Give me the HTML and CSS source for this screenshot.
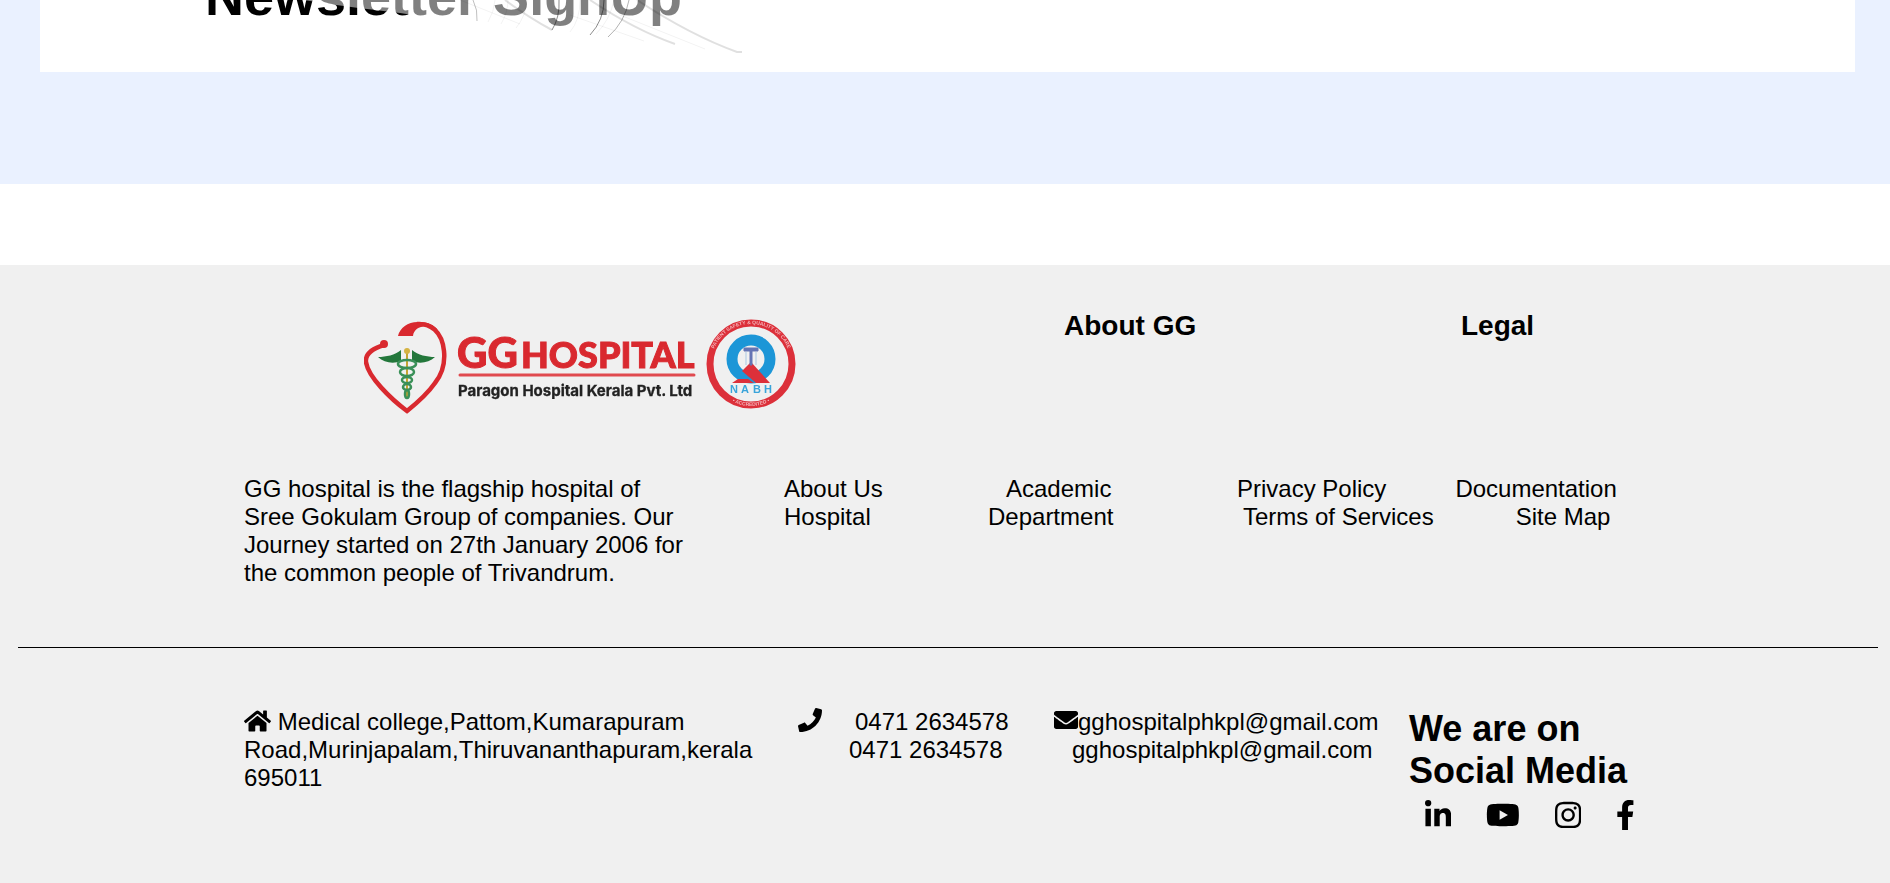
FILE: index.html
```html
<!DOCTYPE html>
<html lang="en">
<head>
<meta charset="utf-8">
<meta name="viewport" content="width=device-width, initial-scale=1">
<title>GG Hospital</title>
<link rel="stylesheet" href="styles.css">
</head>
<body>
<section class="newsletter">
  <div class="newsletter-card">
    <h2 class="newsletter-title">Newsletter SignUp</h2>
    <svg class="newsletter-art" viewBox="0 0 480 60" aria-hidden="true">
      <path d="M24 0Q60 6 120 13Q190 24 280 36L462 55L430 0Z" fill="#fff" fill-opacity=".5"/>
      <g fill="none" stroke="#000">
        <path d="M193 0Q198 10 197 21" stroke-opacity=".25"/>
        <path d="M279 0Q280 17 272 30M324 0Q324 20 310 35" stroke-opacity=".45"/>
        <path d="M349 0Q345 22 328 37" stroke-opacity=".3"/>
        <path d="M225 0Q248 17 272 30M310 0Q355 30 395 44" stroke-opacity=".12" stroke-width="2"/>
        <path d="M357 0Q410 35 457 52H462" stroke-opacity=".12" stroke-width="2"/>
        <path d="M228 0Q228 12 221 24M247 0Q246 16 236 28M300 0Q300 20 290 32M334 0Q330 20 316 34M180 0L240 24M290 15L364 41M340 15L425 49M215 0Q214 12 208 22" stroke-opacity=".05"/>
      </g>
    </svg>
  </div>
</section>

<footer class="footer">
  <div class="footer-top">
    <a class="brand" href="#" aria-label="GG Hospital home">
      <svg class="logo" viewBox="0 0 436 96" role="img" aria-label="GG Hospital, Paragon Hospital Kerala Pvt. Ltd, NABH accredited">
        <g fill="none" stroke="#d9292f" stroke-width="4.500">
          <path d="M20 26C7 30 1 35 2 43C4 58 27 80 43 92C53 84 64 74 71 64C79 54 81 42 80 32C78 12 66 4 53 5"/>
        </g>
        <circle cx="20" cy="25" r="4" fill="#d9292f"/>
        <path d="M34 17C36 8 45 2 56 3C64 3 70 6 74 11C63 4 50 7 49 17Z" fill="#d9292f"/>
        <path d="M14 38C22 38 31 36 37 31V42C30 45 20 44 14 38ZM71 38C63 38 54 36 48 31V42C55 45 65 44 71 38Z" fill="#23773b"/>
        <path d="M43 33V80" stroke="#c5a432" stroke-width="2"/>
        <circle cx="43" cy="32" r="3" fill="#d5b343"/>
        <g fill="none" stroke="#3a9058" stroke-width="2.500">
          <ellipse cx="43" cy="45" rx="9" ry="4"/><ellipse cx="43" cy="53" rx="7" ry="4"/><ellipse cx="43" cy="61" rx="5" ry="3"/><ellipse cx="43" cy="68" rx="4" ry="3"/><ellipse cx="43" cy="75" rx="2" ry="4"/>
        </g>
        <text class="logo-gg" x="93" y="49">GG</text>
        <text class="logo-name" x="157" y="49">HOSPITAL</text>
        <path d="M96 56H330" stroke="#e04a4f" stroke-width="3" stroke-linecap="round"/>
        <text class="logo-sub" x="94" y="77">Paragon Hospital Kerala Pvt. Ltd</text>
        <circle cx="387" cy="45" r="41" fill="none" stroke="#dc303a" stroke-width="7"/>
        <circle cx="387" cy="40" r="19" fill="none" stroke="#1c96d7" stroke-width="11"/>
        <path d="M387 43L406 64H392L378 52Z" fill="#dc303a"/>
        <path d="M368 64L374 60H384L390 64Z" fill="#dc303a"/>
        <path d="M380 29H394V32H388V46H386V32H380Z" fill="#6474b4" stroke="#6474b4"/>
        <path d="M382 33V46M392 33V46" stroke="#a9c8e3"/>
        <text class="logo-nabh" x="366" y="74">N</text><text class="logo-nabh" x="377" y="74">A</text><text class="logo-nabh" x="389" y="74">B</text><text class="logo-nabh" x="400" y="74">H</text>
        <path id="seal-top" d="M347 45A40 40 0 0 1 427 45" fill="none"/>
        <path id="seal-bottom" d="M345 45A42 42 0 0 0 429 45" fill="none"/>
        <text class="logo-seal"><textPath href="#seal-top" startOffset="50%">PATIENT SAFETY &amp; QUALITY OF CARE</textPath></text>
        <text class="logo-seal"><textPath href="#seal-bottom" startOffset="50%">• ACCREDITED •</textPath></text>
      </svg>
    </a>
    <h3 class="footer-title">About GG</h3>
    <h3 class="footer-title">Legal</h3>
  </div>

  <div class="footer-links">
    <p class="about-text">GG hospital is the flagship hospital of Sree Gokulam Group of companies. Our Journey started on 27th January 2006 for the common people of Trivandrum.</p>
    <nav class="about-links" aria-label="About GG">
      <a href="#">About Us</a><a class="indent-lg" href="#">Academic</a>
      <a href="#">Hospital</a><a href="#">Department</a>
    </nav>
    <nav class="legal-links" aria-label="Legal">
      <div class="legal-row legal-row-first"><a href="#">Privacy Policy</a><a href="#">Documentation</a></div>
      <div class="legal-row legal-row-second"><a href="#">Terms of Services</a><a href="#">Site Map</a></div>
    </nav>
  </div>

  <hr class="divider">

  <div class="footer-contact">
    <address class="address"><svg class="icon-home" viewBox="0 0 576 512" aria-hidden="true"><path d="M280.400 148.300L96 300.100V464a16 16 0 0 0 16 16l112.100-.3a16 16 0 0 0 15.900-16V368a16 16 0 0 1 16-16h64a16 16 0 0 1 16 16v95.600a16 16 0 0 0 16 16.100L464 480a16 16 0 0 0 16-16V300L295.700 148.300a12.200 12.200 0 0 0-15.300 0zM571.600 251.500L488 182.600V44.100a12 12 0 0 0-12-12h-56a12 12 0 0 0-12 12v72.600L318.500 43a48 48 0 0 0-61 0L4.300 251.500a12 12 0 0 0-1.600 16.900l25.500 31A12 12 0 0 0 45.200 301L280.400 107.200a12.200 12.200 0 0 1 15.300 0L530.900 301a12 12 0 0 0 16.900-1.600l25.500-31a12 12 0 0 0-1.700-16.900z"/></svg> Medical college,Pattom,Kumarapuram Road,Murinjapalam,Thiruvananthapuram,kerala 695011</address>
    <div class="phones">
      <svg class="icon-sm" viewBox="0 0 512 512" aria-hidden="true"><path d="M493.400 24.600l-104-24c-11.300-2.600-22.900 3.300-27.500 13.900l-48 112c-4.200 9.800-1.400 21.300 6.900 28l60.600 49.600c-36 76.700-98.900 140.500-177.200 177.200l-49.600-60.600c-6.800-8.300-18.200-11.100-28-6.900l-112 48C3.900 366.500-2 378.100.6 389.400l24 104C27.100 504.200 36.700 512 48 512c256.100 0 464-207.500 464-464 0-11.200-7.700-20.900-18.600-23.400z"/></svg>
      <div><a class="indent" href="tel:04712634578">0471 2634578</a><a href="tel:04712634578">0471 2634578</a></div>
    </div>
    <div class="emails">
      <svg class="icon-sm" viewBox="0 0 512 512" aria-hidden="true"><path d="M502.300 190.800c3.900-3.100 9.700-.2 9.700 4.700V400c0 26.500-21.500 48-48 48H48c-26.500 0-48-21.500-48-48V195.600c0-5 5.700-7.800 9.700-4.700 22.400 17.400 52.100 39.500 154.100 113.600 21.100 15.400 56.700 47.800 92.200 47.600 35.700.3 72-32.800 92.300-47.600 102-74.100 131.600-96.300 154-113.700zM256 320c23.200.4 56.600-29.200 73.400-41.400 132.700-96.300 142.800-104.700 173.400-128.700 5.800-4.500 9.200-11.500 9.200-18.900v-19c0-26.500-21.500-48-48-48H48c-26.500 0-48 21.500-48 48v19c0 7.400 3.400 14.300 9.200 18.900 30.600 23.900 40.700 32.400 173.400 128.700 16.800 12.200 50.200 41.800 73.400 41.400z"/></svg>
      <div class="email-list"><a class="indent" href="mailto:gghospitalphkpl@gmail.com">gghospitalphkpl@gmail.com</a><a href="mailto:gghospitalphkpl@gmail.com">gghospitalphkpl@gmail.com</a></div>
    </div>
    <div class="social">
      <h2 class="social-title">We are on Social Media</h2>
      <div class="social-icons">
        <a href="#" aria-label="LinkedIn"><svg viewBox="0 0 448 512"><path d="M100.300 448H7.400V148.900h92.900zM53.800 108.100C24.100 108.100 0 83.500 0 53.800a53.800 53.800 0 0 1 107.600 0c0 29.700-24.100 54.300-53.800 54.300zM447.900 448h-92.700V302.400c0-34.700-.7-79.200-48.300-79.200-48.300 0-55.700 37.700-55.700 76.700V448h-92.800V148.900h89.100v40.800h1.300c12.400-23.500 42.700-48.300 87.900-48.300 94 0 111.300 61.900 111.300 142.300V448z"/></svg></a>
        <a href="#" aria-label="YouTube"><svg viewBox="0 0 576 512"><path d="M549.700 124.100c-6.300-23.700-24.800-42.300-48.300-48.600C458.800 64 288 64 288 64S117.200 64 74.600 75.500c-23.500 6.300-42 24.900-48.300 48.600C15 167 15 256.400 15 256.400s0 89.400 11.400 132.300c6.300 23.700 24.800 41.500 48.300 47.800C117.200 448 288 448 288 448s170.800 0 213.400-11.500c23.500-6.300 42-24.200 48.300-47.800 11.400-42.900 11.400-132.300 11.400-132.300s0-89.400-11.400-132.300zM232.200 337.600V175.200l142.700 81.200z"/></svg></a>
        <a href="#" aria-label="Instagram"><svg viewBox="0 0 448 512"><path d="M224.100 141c-63.600 0-114.900 51.300-114.900 114.900s51.300 114.900 114.900 114.900S339 319.500 339 255.900 287.700 141 224.100 141zm0 189.600c-41.100 0-74.700-33.500-74.700-74.700s33.500-74.700 74.700-74.700 74.700 33.500 74.700 74.700-33.600 74.700-74.700 74.700zm146.400-194.300c0 14.900-12 26.800-26.800 26.800-14.900 0-26.800-12-26.800-26.800s12-26.800 26.800-26.800 26.800 12 26.800 26.800zm76.100 27.200c-1.700-35.900-9.900-67.700-36.200-93.900-26.200-26.200-58-34.400-93.900-36.200-37-2.100-147.900-2.100-184.900 0-35.800 1.700-67.600 9.900-93.900 36.100s-34.400 58-36.200 93.900c-2.100 37-2.100 147.900 0 184.900 1.700 35.900 9.900 67.700 36.200 93.900s58 34.400 93.900 36.200c37 2.100 147.900 2.100 184.900 0 35.900-1.700 67.700-9.900 93.900-36.200 26.200-26.200 34.400-58 36.200-93.900 2.100-37 2.100-147.800 0-184.800zM398.800 388c-7.800 19.600-22.900 34.700-42.600 42.600-29.500 11.700-99.500 9-132.100 9s-102.700 2.600-132.100-9c-19.600-7.800-34.700-22.900-42.600-42.600-11.700-29.500-9-99.500-9-132.100s-2.600-102.700 9-132.100c7.800-19.600 22.900-34.700 42.600-42.600 29.500-11.700 99.500-9 132.100-9s102.700-2.600 132.100 9c19.600 7.800 34.700 22.900 42.600 42.600 11.700 29.500 9 99.500 9 132.100s2.700 102.700-9 132.100z"/></svg></a>
        <a href="#" aria-label="Facebook"><svg viewBox="0 0 320 512"><path d="M279.100 288l14.300-92.700h-89V135.200c0-25.300 12.400-50 52.200-50h40.400V6.300S260.400 0 225.400 0C152.200 0 104.300 44.400 104.300 124.700v70.600H22.900V288h81.400v224h100.200V288z"/></svg></a>
      </div>
    </div>
  </div>
</footer>
</body>
</html>
```

FILE: styles.css
```css
* {
  box-sizing: border-box;
}

body {
  margin: 0;
  background: #fff;
  color: #000;
  font-family: Arial, "Liberation Sans", sans-serif;
  font-size: 24px;
  line-height: 28px;
}

h2,
h3,
p {
  margin: 0;
}

a {
  color: inherit;
  text-decoration: none;
}

.newsletter {
  padding: 0 35px 112px 40px;
  background: #eaf1ff;
}

.newsletter-card {
  position: relative;
  overflow: hidden;
  padding: 0 165px 45px;
  background: #fff;
}

.newsletter-title {
  margin-top: -35px;
  font-size: 54px;
  line-height: 62px;
}

.newsletter-art {
  position: absolute;
  top: 0;
  left: 240px;
  width: 480px;
  height: 60px;
}

.footer {
  margin-top: 81px;
  padding-top: 43px;
  padding-bottom: 56px;
  background: #f0f0f0;
}

.footer-top,
.footer-links,
.footer-contact {
  display: grid;
  padding: 0 244px;
}

.footer-top {
  grid-template-columns: 820fr 397fr 185fr;
  min-height: 167px;
}

.brand {
  padding: 11px 0 0 120px;
}

.logo {
  display: block;
  width: 436px;
  height: 96px;
  filter: blur(0.6px);
}

.logo-gg,
.logo-name {
  fill: #d9292f;
  stroke: #d9292f;
  font-family: Lato, sans-serif;
  font-weight: 900;
}

.logo-gg {
  font-size: 42px;
}

.logo-name {
  font-size: 36px;
}

.logo-sub {
  fill: #222;
  stroke: #222;
  stroke-width: 0.3px;
  font-family: Inter, sans-serif;
  font-size: 15px;
  font-weight: 700;
}

.logo-nabh {
  fill: #3aa4da;
  font-size: 11px;
  font-weight: 700;
}

.logo-seal {
  fill: #f3b3b8;
  font-size: 5px;
  font-weight: 700;
  text-anchor: middle;
}

.footer-title {
  padding-top: 2px;
  font-size: 28px;
  line-height: 32px;
}

.footer-links {
  grid-template-columns: 540fr 453fr 409fr;
}

.about-text {
  max-width: 446px;
}

.about-links {
  display: grid;
  grid-template-columns: 204px 1fr;
  align-content: start;
}

.about-links a,
.legal-row a,
.phones a,
.emails a {
  display: block;
  white-space: nowrap;
}

.indent {
  padding-left: 6px;
}

.indent-lg {
  padding-left: 18px;
}

.legal-row {
  display: flex;
}

.legal-row-first {
  gap: 69px;
}

.legal-row-second {
  gap: 82px;
  padding-left: 6px;
}

.divider {
  height: 1px;
  margin: 60px 12px 60px 18px;
  border: 0;
  background: #000;
}

.footer-contact {
  grid-template-columns: 554fr 256fr 355fr 237fr;
}

.address {
  max-width: 520px;
  font-style: normal;
}

.icon-home {
  width: 27px;
  height: 24px;
  vertical-align: -3px;
}

.icon-sm {
  flex: none;
  width: 24px;
  height: 24px;
}

.phones,
.emails {
  display: flex;
}

.phones {
  gap: 27px;
}

.email-list {
  margin-left: -6px;
}

.social-title {
  font-size: 36px;
  line-height: 42px;
}

.social-icons {
  display: flex;
  gap: 35px;
  padding: 8px 0 0 16px;
}

.social-icons a {
  display: block;
}

.social-icons svg {
  display: block;
  height: 30px;
}
```
